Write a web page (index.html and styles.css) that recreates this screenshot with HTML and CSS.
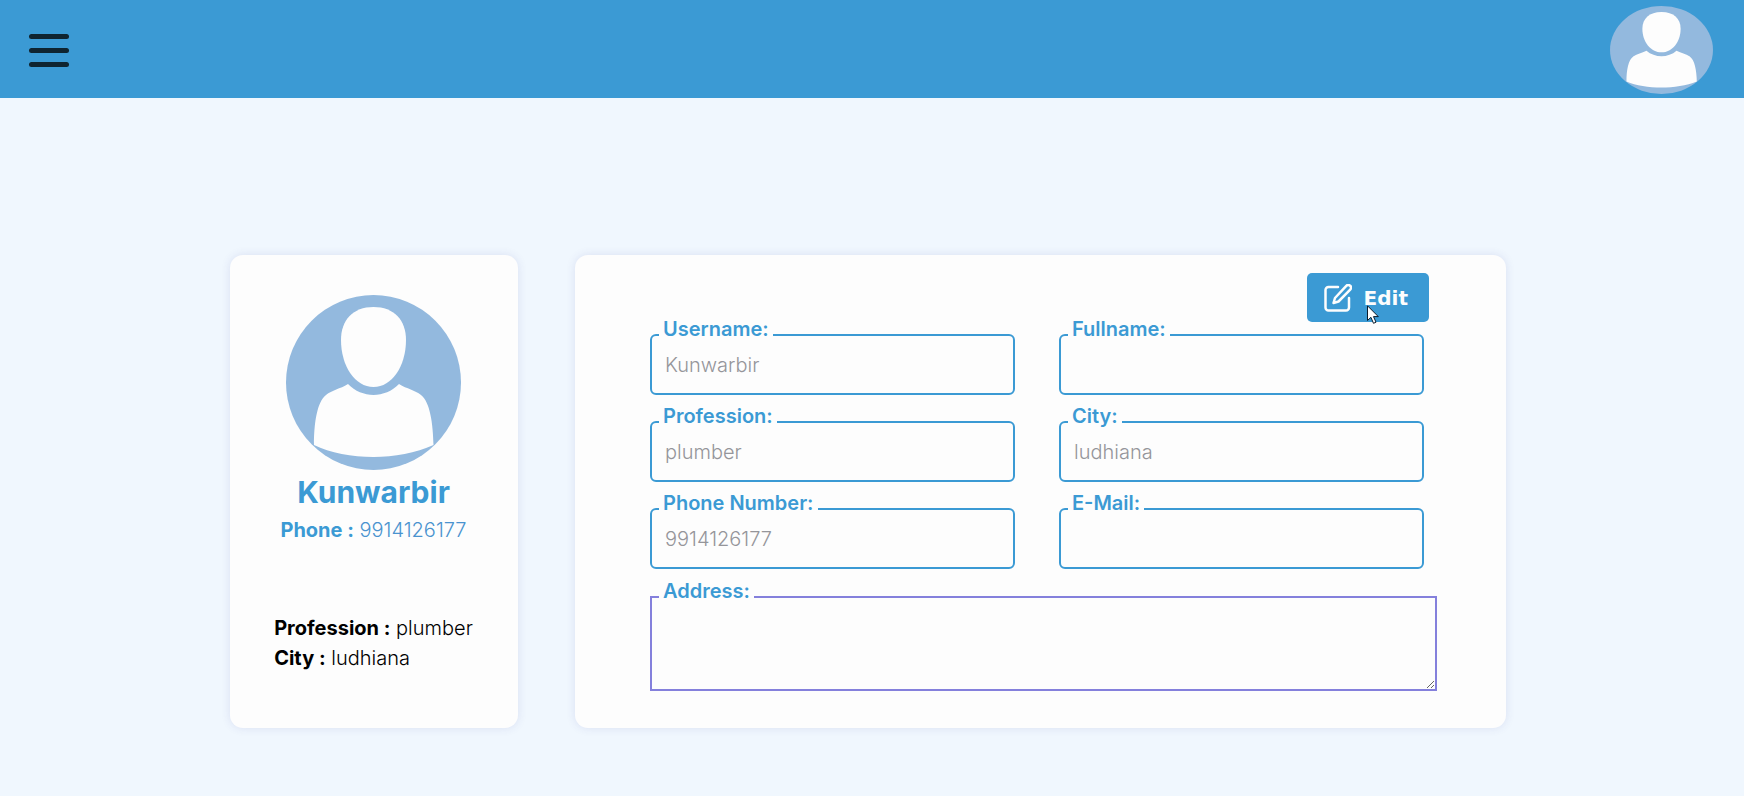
FILE: index.html
```html
<!DOCTYPE html>
<html lang="en">
<head>
<meta charset="utf-8">
<meta name="viewport" content="width=device-width, initial-scale=1">
<title>Profile</title>
<link rel="stylesheet" href="styles.css">
</head>
<body>
<svg class="sprite" aria-hidden="true">
  <symbol id="avatar" viewBox="0 0 175 175" preserveAspectRatio="none">
    <circle class="avatar-bg" cx="87.5" cy="87.5" r="87.5"/>
    <path class="avatar-fg" d="M87.5 12C108 12 120 25 120 45C120 71 106 92 87.5 92C69 92 55 71 55 45C55 25 67 12 87.5 12Z"/>
    <path class="avatar-fg" d="M62 89C76 103.500 99 103.500 113 89C121 94 129 95 135 100C144 107 147 128 147.500 150C130 158 108 162 87.500 162C66 162 44 158 28 150C28 128 31 107 40 100C46 95 54 94 62 89Z"/>
  </symbol>
</svg>
<header class="topbar">
  <button class="menu" type="button" aria-label="Menu">
    <span class="bar"></span><span class="bar"></span><span class="bar"></span>
  </button>
  <a class="account" href="#" aria-label="Account"><svg class="account-img" viewBox="0 0 175 175" preserveAspectRatio="none"><use href="#avatar" width="175" height="175"/></svg></a>
</header>
<main class="profile">
  <section class="card summary">
    <svg class="photo" viewBox="0 0 175 175"><use href="#avatar" width="175" height="175"/></svg>
    <h1 class="name">Kunwarbir</h1>
    <p class="phone"><b>Phone :</b> 9914126177</p>
    <div class="facts">
      <p><b>Profession :</b> plumber</p>
      <p><b>City :</b> ludhiana</p>
    </div>
  </section>
  <form class="card details">
    <button class="edit" type="button">
      <svg class="edit-icon" viewBox="0 0 28 28" aria-hidden="true">
        <path d="M14 3H4.500A3 3 0 0 0 1.500 6V23.500A3 3 0 0 0 4.500 26.500H22A3 3 0 0 0 25 23.500V14"/>
        <path d="M22.300 1.800A2.600 2.600 0 0 1 26.200 5.600L14.500 17.500L9.500 19L11 14Z"/>
      </svg>
      Edit
      <svg class="pointer" viewBox="0 0 12 19" aria-hidden="true"><path d="M.5.8V15.500L3.900 12.300L6.500 18.300L9 17.200L6.500 11.600H11.300Z"/></svg>
    </button>
    <div class="grid">
      <div class="field"><label for="username">Username:</label><input id="username" type="text" placeholder="Kunwarbir"></div>
      <div class="field"><label for="fullname">Fullname:</label><input id="fullname" type="text"></div>
      <div class="field"><label for="profession">Profession:</label><input id="profession" type="text" placeholder="plumber"></div>
      <div class="field"><label for="city">City:</label><input id="city" type="text" placeholder="ludhiana"></div>
      <div class="field"><label for="phone">Phone Number:</label><input id="phone" type="tel" placeholder="9914126177"></div>
      <div class="field"><label for="email">E-Mail:</label><input id="email" type="email"></div>
    </div>
    <div class="field"><label for="address">Address:</label><textarea id="address"></textarea></div>
  </form>
</main>
</body>
</html>
```
FILE: styles.css
```css
:root {
  --blue: #3b9ad4;
  --card: #fdfdfd;
}
* { box-sizing: border-box; }
body {
  margin: 0;
  min-height: 100vh;
  background: #f0f7fe;
  color: #000;
  font: 300 20px/30px Inter, sans-serif;
}
h1, p { margin: 0; }
b { font-weight: 700; }
.sprite { position: absolute; width: 0; height: 0; }
.avatar-bg { fill: #93b9de; }
.avatar-fg { fill: var(--card); }

.topbar {
  display: flex;
  align-items: center;
  justify-content: space-between;
  padding: 6px 31px 4px 29px;
  background: var(--blue);
}
.menu {
  display: flex;
  flex-direction: column;
  gap: 9px;
  padding: 0;
  border: 0;
  background: none;
}
.bar {
  width: 40px;
  height: 5px;
  border-radius: 3px;
  background: #0f2430;
}
.account { display: flex; }
.account-img { width: 103px; height: 88px; }

.profile {
  display: flex;
  gap: 57px;
  padding: 157px 238px 68px 230px;
}
.card {
  border-radius: 13px;
  background: var(--card);
  box-shadow: 0 0 10px rgba(60, 60, 160, 0.12);
}
.summary {
  flex: 0 0 288px;
  display: flex;
  flex-direction: column;
  align-items: center;
  padding: 40px 21px 40px 20px;
}
.photo { width: 175px; height: 175px; }
.name {
  color: var(--blue);
  font-size: 30px;
  line-height: 45px;
}
.phone { color: #4a93cf; }
.phone b { color: var(--blue); }
.facts { margin-top: 68px; }

.details {
  flex: 1;
  display: flex;
  flex-direction: column;
  min-width: 0;
  padding: 18px 69px 37px 75px;
}
.edit {
  position: relative;
  align-self: flex-end;
  display: flex;
  align-items: center;
  gap: 12px;
  height: 49px;
  margin: 0 8px -5px 0;
  padding: 0 21px 0 17px;
  border: 0;
  border-radius: 5px;
  background: var(--blue);
  color: #fdfdfd;
  font: bold 20px/24px "DejaVu Sans", sans-serif;
}
.edit-icon {
  width: 28px;
  height: 28px;
  fill: none;
  stroke: #fdfdfd;
  stroke-width: 2.500;
  stroke-linecap: round;
  stroke-linejoin: round;
}
.pointer {
  position: absolute;
  z-index: 2;
  left: 60px;
  top: 32px;
  width: 12px;
  height: 19px;
  fill: #fff;
  stroke: #0a1a2a;
  stroke-width: 1;
}
.grid {
  display: grid;
  grid-template-columns: 1fr 1fr;
  gap: 9px 44px;
  margin-bottom: 10px;
  padding-right: 13px;
}
.field {
  display: flex;
  flex-direction: column;
}
.field label {
  z-index: 1;
  align-self: flex-start;
  margin: 0 0 -7px 9px;
  padding: 0 4px;
  background: var(--card);
  color: var(--blue);
  font-weight: 600;
  line-height: 24px;
}
.field input,
.field textarea {
  width: 100%;
  padding: 0 13px;
  border: 2px solid var(--blue);
  background: transparent;
  color: #222;
  font: inherit;
}
.field input {
  height: 61px;
  border-radius: 6px;
}
.field textarea {
  display: block;
  height: 95px;
  padding: 10px 13px;
  border-color: #8480dc;
  resize: vertical;
}
.field input::placeholder { color: #95959a; }
```
